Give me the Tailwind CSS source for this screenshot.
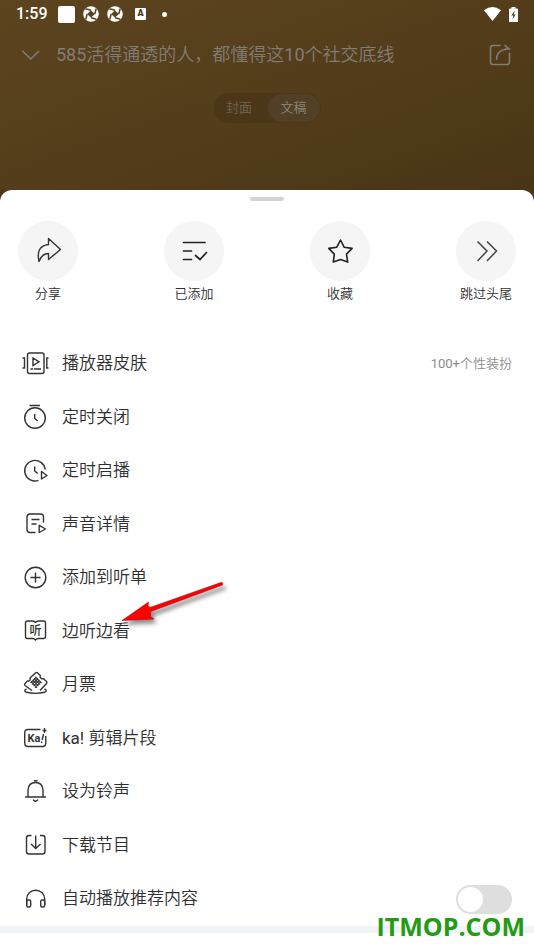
<!DOCTYPE html>
<html lang="zh-CN">
<head>
<meta charset="utf-8">
<meta name="viewport" content="width=device-width, initial-scale=1">
<title>播放器</title>
<script src="https://cdn.jsdelivr.net/npm/@tailwindcss/browser@4"></script>
</head>
<body class="relative flex min-h-screen flex-col overflow-x-hidden bg-[#4c3817] font-['Roboto','Noto_Sans_CJK_SC',sans-serif] font-[350] text-[#2f2f2f]">
<header class="h-[190px] shrink-0 bg-linear-to-br from-[#5c441f] via-[#543d1a] to-[#483516]">
  <div class="flex h-7 items-center justify-between pr-4 pl-4 text-white">
    <div class="flex items-center">
      <span class="w-[42px] text-base font-medium">1:59</span>
      <span class="size-[17px] rounded-xs bg-white"></span>
      <svg class="ml-2 size-4" viewBox="0 0 16 16"><circle cx="8" cy="8" r="7.800" fill="#fff"/><path d="M8 4.200L11.800 8 8 11.800 4.200 8z" fill="#59421d"/><path d="M8 4.200L2.500 2.800M11.800 8l1.400-5.500M8 11.800l5.500 1.400M4.200 8l-1.400 5.500" stroke="#59421d" stroke-width="1.500"/></svg>
      <svg class="ml-2 size-4" viewBox="0 0 16 16"><circle cx="8" cy="8" r="7.800" fill="#fff"/><path d="M8 4.200L11.800 8 8 11.800 4.200 8z" fill="#59421d"/><path d="M8 4.200L2.500 2.800M11.800 8l1.400-5.500M8 11.800l5.500 1.400M4.200 8l-1.400 5.500" stroke="#59421d" stroke-width="1.500"/></svg>
      <span class="ml-3 flex h-3 w-[11px] items-center justify-center rounded-[1px] bg-white text-[9px] font-black text-[#45320f]">A</span>
      <span class="ml-4 size-[5px] rounded-full bg-white"></span>
    </div>
    <div class="flex items-center gap-2">
      <svg class="h-[14px] w-[17px]" viewBox="0 0 17 14" fill="#fff"><path d="M0 3.200Q8.500-3 17 3.200L8.500 14z"/></svg>
      <svg class="h-[15px] w-[9px]" viewBox="0 0 9 15"><path d="M0 2.500Q0 1.500 1 1.500H2.500V0h4v1.500H8q1 0 1 1V15H0z" fill="#fff"/><path d="M5.800 3.500L2.300 8.500h2L3.500 12.500l3.200-5H4.800z" fill="#54401b"/></svg>
    </div>
  </div>
  <div class="flex h-[54px] items-center pr-[22px] pl-[21px] text-[#827c77]">
    <button type="button" aria-label="收起"><svg class="size-5" viewBox="0 0 20 20" fill="none" stroke="currentColor" stroke-width="1.600"><path d="M1.500 6l8.200 8L18 6"/></svg></button>
    <h1 class="ml-[15px] flex-1 text-lg font-[350]"><span class="font-normal">585</span>活得通透的人，都懂得这<span class="font-normal">10</span>个社交底线</h1>
    <button type="button" aria-label="分享"><svg class="size-6" viewBox="0 0 24 24" fill="none" stroke="currentColor" stroke-width="1.600"><path d="M12.500 2.500H5Q2.500 2.500 2.500 5v14Q2.500 21.500 5 21.500h14q2.500 0 2.500-2.500V9.500M8.500 17Q8.500 6.500 20.500 6M16.500 2l4.500 4h-4"/></svg></button>
  </div>
  <div class="flex justify-center">
    <div class="mt-[11px] flex h-[30px] items-center rounded-full bg-[#4b3718] p-px text-[13px] text-[#716552]">
      <button type="button" class="h-7 w-[53px] pr-1">封面</button>
      <button type="button" class="h-7 w-[52px] rounded-full bg-[#514025] text-[#8d8779]">文稿</button>
    </div>
  </div>
</header>
<main class="flex flex-1 flex-col rounded-t-xl bg-white pt-[7px]">
  <div class="mx-auto h-1 w-[34px] rounded-full bg-[#d3d3d3]"></div>
  <div class="mx-[18px] mt-5 flex justify-between text-[13px] leading-5">
    <button type="button" class="flex w-[60px] flex-col items-center gap-[3px] whitespace-nowrap"><span class="flex size-[60px] items-center justify-center rounded-full bg-[#f5f5f5]"><svg class="size-7" viewBox="0 0 28 28" fill="none" stroke="#333" stroke-width="1.400" stroke-linejoin="round"><path d="M14.500 1.500L26.500 12.500 14.500 22.500V16.500Q8 16.500 5 24.500 1.500 9 14.500 7.500z"/></svg></span>分享</button>
    <button type="button" class="flex w-[60px] flex-col items-center gap-[3px] whitespace-nowrap"><span class="flex size-[60px] items-center justify-center rounded-full bg-[#f5f5f5]"><svg class="size-7" viewBox="0 0 28 28" fill="none" stroke="#222" stroke-width="1.700" stroke-linecap="round"><path d="M3.500 5.500h21.500M3.500 14h8M3.500 22.500h8M15.500 18.500l4.500 4 6.500-7"/></svg></span>已添加</button>
    <button type="button" class="flex w-[60px] flex-col items-center gap-[3px] whitespace-nowrap"><span class="flex size-[60px] items-center justify-center rounded-full bg-[#f5f5f5]"><svg class="size-7" viewBox="0 0 28 28" fill="none" stroke="#222" stroke-width="1.600" stroke-linejoin="round"><path d="M14.500 3l3.600 7.200 8 1.200-5.600 5.700 1.200 8-7.200-2.500-7.200 2.500 1-8L2.800 11.400l8-1.200z"/></svg></span>收藏</button>
    <button type="button" class="flex w-[60px] flex-col items-center gap-[3px] whitespace-nowrap"><span class="flex size-[60px] items-center justify-center rounded-full bg-[#f5f5f5]"><svg class="size-7" viewBox="0 0 28 28" fill="none" stroke="#444" stroke-width="1.500"><path d="M5.500 4.500l9.500 9.500-9.500 10M15 4.500l9.500 9.500-9.500 10"/></svg></span>跳过头尾</button>
  </div>
  <ul class="mt-[33px] grid flex-1 auto-rows-fr pr-[22px] pl-[22px] text-[17px]">
    <li class="flex items-center"><button type="button" class="flex flex-1 items-center gap-3 text-left"><svg class="size-7" viewBox="0 0 28 28" fill="none" stroke="#333" stroke-width="1.400"><rect x="5.500" y="3" width="16.500" height="20.500" rx="2"/><path d="M11 8v7.500l6-3.700zM8.500 19h2.500M12 19h7M.5 8h2v10h-2M26.500 8h-1.700v10h1.700"/></svg><span class="flex-1">播放器皮肤</span><span class="text-[13px] text-[#8c8c8c]"><span class="font-normal">100+</span>个性装扮</span></button></li>
    <li class="flex items-center"><button type="button" class="flex flex-1 items-center gap-3"><svg class="size-7" viewBox="0 0 28 28" fill="none" stroke="#333" stroke-width="1.400"><circle cx="13" cy="15" r="10.300"/><path d="M7.500 2.500H18M12.700 11v4.500l3 2.500"/></svg>定时关闭</button></li>
    <li class="flex items-center"><button type="button" class="flex flex-1 items-center gap-3"><svg class="size-7" viewBox="0 0 28 28" fill="none" stroke="#333" stroke-width="1.400" stroke-linejoin="round"><path d="M23.200 12.500A10.300 10.300 0 1 0 16.500 23.400M12.700 9.500V14l3 2.500M19.500 14.500v7.500l5.500-3.500z"/></svg>定时启播</button></li>
    <li class="flex items-center"><button type="button" class="flex flex-1 items-center gap-3"><svg class="size-7" viewBox="0 0 28 28" fill="none" stroke="#333" stroke-width="1.400" stroke-linejoin="round"><path d="M21.500 12.500V7q0-3-3-3H8Q5 4 5 7M5 7v12.500q0 3 3 3h5.500M9.500 9.500h8M9.500 14h5M17.200 15.300v7.200l6.300-3.500z"/></svg>声音详情</button></li>
    <li class="flex items-center"><button type="button" class="flex flex-1 items-center gap-3"><svg class="size-7" viewBox="0 0 28 28" fill="none" stroke="#333" stroke-width="1.400"><circle cx="13.500" cy="13.500" r="10.300"/><path d="M13.500 8.500v10M8.500 13.500h10"/></svg>添加到听单</button></li>
    <li class="flex items-center"><button type="button" class="flex flex-1 items-center gap-3"><svg class="size-7" viewBox="0 0 28 28"><path d="M13.500 5.500Q12.500 4 10.500 4H5.500Q3.500 4 3.500 6v13.500q0 2 2 2h5.500q1 0 2.500 1.500 1.500-1.500 2.500-1.500h5.500q2 0 2-2V6q0-2-2-2h-5q-2 0-3 1.500" fill="none" stroke="#333" stroke-width="1.400"/><text x="7.500" y="17.500" font-size="12" font-weight="500" fill="#333">听</text></svg>边听边看</button></li>
    <li class="flex items-center"><button type="button" class="flex flex-1 items-center gap-3"><svg class="size-7" viewBox="0 0 28 28" fill="none" stroke="#333" stroke-width="1.400" stroke-linejoin="round"><path d="M10 19.500L3 14.500Q2 13.500 3 12.500L5.500 10Q7 10.300 7.800 9.300T8 7L13.700 1.800Q14.700 1 15.700 2L18.300 4.500Q17.700 6 18.700 7T21.500 7.700L24.500 10.500Q25.400 11.500 24.500 12.500L18 19.500M4.500 17.800Q1 19.800 4.500 21.300 13.500 23.500 22.500 21.300 26 19.800 22.500 17.800"/><path d="M8.500 12l6-6M10 13.500l6-6M11.500 15l6-6M13 16.500l6-6M13.500 6l6 6M12 7.500l6 6M10.500 9l6 6M9 10.500l6 6" stroke-width="1.200"/></svg>月票</button></li>
    <li class="flex items-center"><button type="button" class="flex flex-1 items-center gap-3"><svg class="size-7" viewBox="0 0 28 28"><path d="M18.500 4.500H6Q2.700 4.500 2.700 8v10q0 3.500 3.300 3.500h14.500q3.300 0 3.300-3.500v-7M22.500 3v5M20.500 5.500h4" fill="none" stroke="#333" stroke-width="1.400"/><text x="5.500" y="17" font-size="11" font-weight="700" fill="#333">Ka</text><path d="M21.500 9l-1.300 6M19.800 16.500l-.3 1.500" stroke="#333" stroke-width="1.400"/></svg><span><span class="font-normal">ka! </span>剪辑片段</span></button></li>
    <li class="flex items-center"><button type="button" class="flex flex-1 items-center gap-3"><svg class="size-7" viewBox="0 0 28 28" fill="none" stroke="#333" stroke-width="1.400" stroke-linecap="round"><path d="M3.500 19h20M6 19v-7Q6.500 4.500 13.500 4.500T21 12V19M12.500 2.700h2.500M11.500 22q2 2.500 4.200 0"/></svg>设为铃声</button></li>
    <li class="flex items-center"><button type="button" class="flex flex-1 items-center gap-3"><svg class="size-7" viewBox="0 0 28 28" fill="none" stroke="#333" stroke-width="1.400"><path d="M9.500 3.500H7Q4.500 3.500 4.500 6v13.500q0 2.500 2.500 2.500h13.500q2.500 0 2.500-2.500V6q0-2.500-2.500-2.500H18M13.700 3.500v13M9 12l4.700 4.500 4.800-4.500"/></svg>下载节目</button></li>
    <li class="flex items-center"><label for="autoplay" class="flex flex-1 items-center gap-3"><svg class="size-7" viewBox="0 0 28 28" fill="none" stroke="#333" stroke-width="1.400"><path d="M4.700 20v-6a9 8.700 0 0 1 18 0v6"/><rect x="4.700" y="15" width="4" height="7" rx="1.500"/><rect x="18.700" y="15" width="4" height="7" rx="1.500"/></svg>自动播放推荐内容</label>
      <input id="autoplay" type="checkbox" role="switch" class="h-[29px] w-14 appearance-none rounded-full bg-[#dedede] before:mt-[2px] before:ml-[2px] before:block before:size-[25px] before:rounded-full before:bg-white checked:bg-[#ff5a3c] checked:before:ml-[29px]"></li>
  </ul>
  <div class="mb-[17px] h-[7px] bg-[#f0f4f8]"></div>
</main>
<svg class="pointer-events-none absolute top-[575px] left-[115px] h-[60px] w-[125px] drop-shadow-[3px_4px_2px_rgb(0_0_0/0.450)]" viewBox="0 0 125 60"><path d="M106.500 7.300L35 32.500 33 30.500 33.500 27 7 45.500 39 44 35.500 41.500 35.800 36.500 107.500 10q1-2-1-2.700z" fill="#f00" stroke="#a31212" stroke-width=".6"/></svg>
<div class="absolute right-[9px] bottom-[11px] font-['Open_Sans',sans-serif] text-[25px] leading-[26px] font-bold text-[#259a14]">ITMOP.COM</div>
</body>
</html>
